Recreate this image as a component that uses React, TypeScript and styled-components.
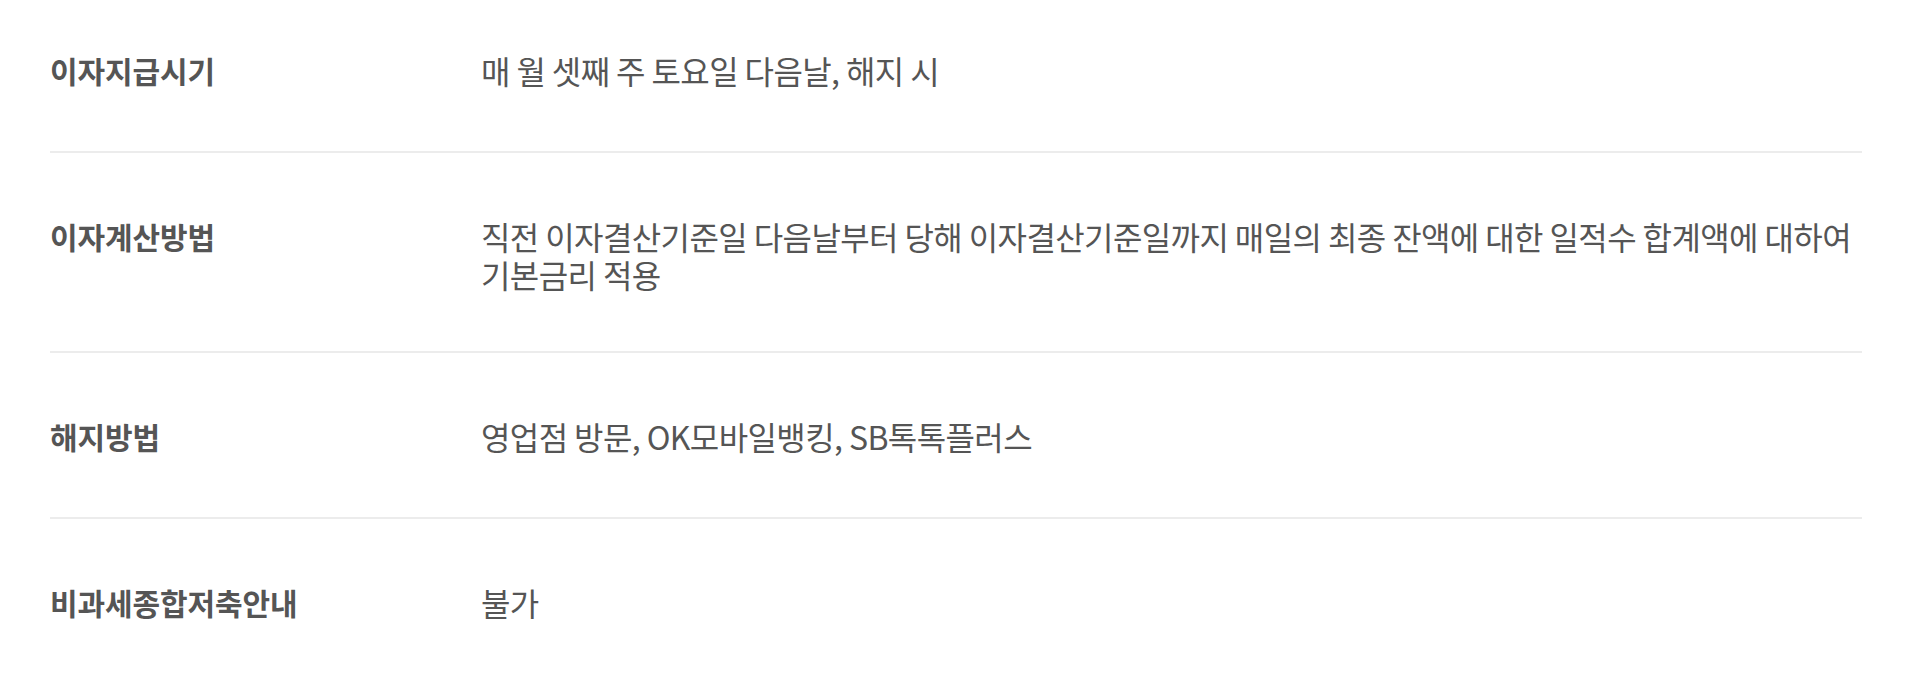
import * as React from 'react'
import styled, { createGlobalStyle } from 'styled-components'

const GlobalStyle = createGlobalStyle`
  html, body {
    margin: 0;
    padding: 0;
    background: #fff;
  }
  body {
    font-family: 'Noto Sans CJK KR', 'Noto Sans', sans-serif;
    color: #555;
  }
`

const rows = [
  { label: '이자지급시기', value: ['매 월 셋째 주 토요일 다음날, 해지 시'] },
  {
    label: '이자계산방법',
    value: [
      '직전 이자결산기준일 다음날부터 당해 이자결산기준일까지 매일의 최종 잔액에 대한 일적수 합계액에 대하여',
      '기본금리 적용',
    ],
  },
  { label: '해지방법', value: ['영업점 방문, OK모바일뱅킹, SB톡톡플러스'] },
  { label: '비과세종합저축안내', value: ['불가'] },
]

export default function App() {
  return (
    <>
      <GlobalStyle />
      <Wrapper>
        <List>
          {rows.map((row) => (
            <Row key={row.label}>
              <Label>{row.label}</Label>
              <Value>
                {row.value.map((line) => (
                  <Line key={line}>{line}</Line>
                ))}
              </Value>
            </Row>
          ))}
        </List>
      </Wrapper>
    </>
  )
}

const Wrapper = styled.div`
  padding: 0 50px;
`

const List = styled.dl`
  margin: 0;
`

const Row = styled.div`
  display: grid;
  grid-template-columns: 431px 1fr;
  align-items: start;
  padding: 60px 0 58px;
  border-bottom: 2px solid #ececec;

  &:first-child {
    padding-top: 47px;
  }
  &:last-child {
    border-bottom: none;
  }
`

const Label = styled.dt`
  font-size: 30px;
  line-height: 46px;
  font-weight: 700;
  letter-spacing: -0.1px;
`

const Value = styled.dd`
  margin: 0;
  padding-top: 4px;
  font-size: 32px;
  line-height: 38px;
  font-weight: 400;
  letter-spacing: -0.6px;
`

const Line = styled.div`
  white-space: nowrap;
`
